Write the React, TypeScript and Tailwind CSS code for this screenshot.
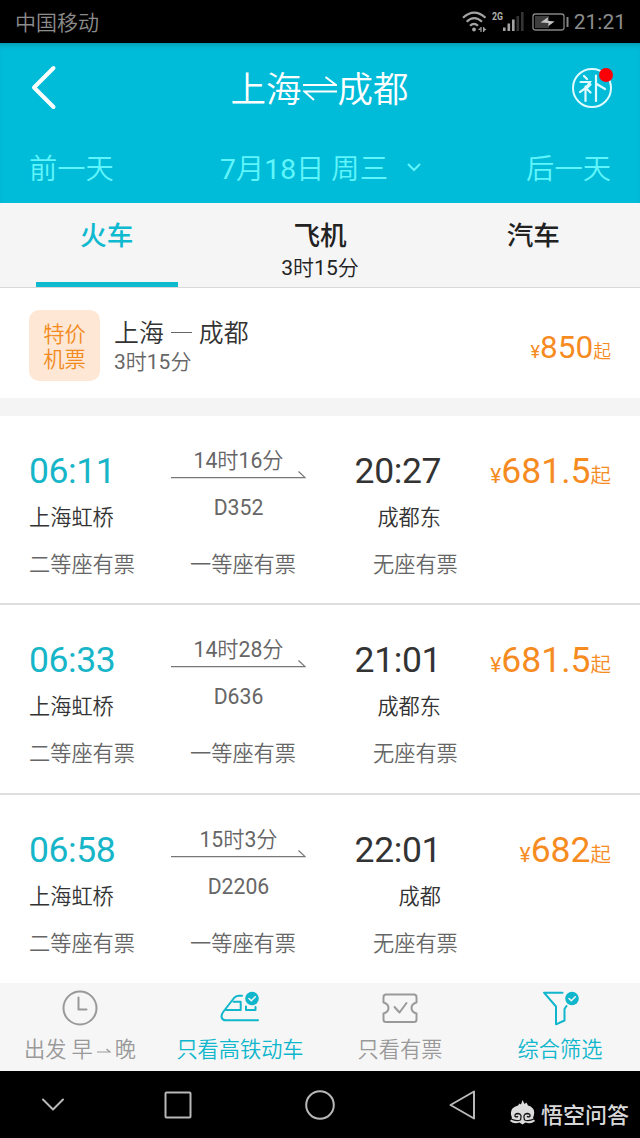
import type { ReactNode } from "react";

// Types
interface Train {
  depart: string;
  arrive: string;
  from: string;
  to: string;
  duration: string;
  code: string;
  price: string;
}

const trains: Train[] = [
  { depart: "06:11", arrive: "20:27", from: "上海虹桥", to: "成都东", duration: "14时16分", code: "D352", price: "681.5" },
  { depart: "06:33", arrive: "21:01", from: "上海虹桥", to: "成都东", duration: "14时28分", code: "D636", price: "681.5" },
  { depart: "06:58", arrive: "22:01", from: "上海虹桥", to: "成都", duration: "15时3分", code: "D2206", price: "682" },
];

function StatusBar() {
  return (
    <div className="flex h-[43px] items-center bg-black pl-[15px] pr-[14px] text-[21px] leading-none text-[#8c8c8c]">
      <span className="pt-[3px]">中国移动</span>
      <svg className="ml-auto" width="108" height="24" viewBox="0 0 108 24" fill="none">
        {/* wifi */}
        <g stroke="#a3a3a3" strokeWidth="2.2">
          <path d="M1 7.8Q12-2.5 23.5 7.8" />
          <path d="M4.7 11.8Q12 4.5 20 11.8" />
          <path d="M8 15.8Q12 11.8 16 15.8" />
        </g>
        <circle cx="12" cy="19.5" r="1.9" fill="#a3a3a3" />
        <path d="M19 17v5M21.6 17v5" stroke="#a3a3a3" strokeWidth="1.2" />
        <path d="M18.5 17.5l-2.5 2.5h2.5zM22 18l2.5 1.5L22 21z" fill="#a3a3a3" />
        <text x="30" y="10" fontSize="10.5" fontWeight="700" fill="#b0b0b0" textLength="11" lengthAdjust="spacingAndGlyphs">2G</text>
        {/* signal bars */}
        <g fill="#a3a3a3">
          <rect x="41" y="17.5" width="2.6" height="3.5" />
          <rect x="45.5" y="13.5" width="2.6" height="7.5" />
          <rect x="50" y="9.5" width="2.6" height="11.5" />
        </g>
        <g fill="#343434">
          <rect x="54.5" y="6" width="2.6" height="15" />
          <rect x="59" y="2" width="2.6" height="19" />
        </g>
        {/* battery */}
        <rect x="71" y="4" width="31" height="16" rx="2.5" stroke="#858585" strokeWidth="1.3" />
        <rect x="73" y="6" width="14" height="12" fill="#3d3d3d" />
        <path d="M78.5 12.5L86 7.3l-.4 3.5 7 .8-6.4 4.7.3-3.2z" fill="#c4c4c4" />
        <path d="M105.5 7v10" stroke="#858585" strokeWidth="2" />
      </svg>
      <span className="ml-[4px] pt-[2px]">21:21</span>
    </div>
  );
}

function Header() {
  return (
    <header className="h-40 bg-[#00bcd8] shadow-[inset_0_5px_5px_-3px_rgba(0,90,105,0.35)]">
      <div className="flex h-[90px] items-center justify-between pl-[30px] pr-[28px] text-white">
        <svg width="28" height="46" viewBox="0 0 28 46" fill="none" stroke="currentColor" strokeWidth="4" strokeLinecap="round" strokeLinejoin="round">
          <path d="M23.5 3L4 22.5L23.5 42" />
        </svg>
        <h1 className="ml-[9px] flex items-center pt-[6px] text-[35.5px] leading-none">
          <span>上海</span>
          <svg className="mx-[1px] -mt-[3px]" width="34" height="28" viewBox="0 0 34 28" fill="none" stroke="currentColor" strokeWidth="2">
            <path d="M0 9H33L22.5 1" />
            <path d="M34 15.5H1.5L11 24" />
          </svg>
          <span>成都</span>
        </h1>
        <div className="relative flex size-[40px] items-center justify-center rounded-full border-2 border-[#dffbff]">
          <svg width="28" height="28" viewBox="0 0 28 28" fill="none" stroke="#dffbff" strokeWidth="2.2" strokeLinecap="round">
            <path d="M6 2l3 3M2.5 8h9.5Q8.5 14 2 18M7.5 12.5V27M12.5 10.5L8.5 14.5L12.5 18.5" />
            <path d="M18 1.5V27M18 9.5L27 15" />
          </svg>
          <span className="absolute -right-[3px] -top-[2px] size-[14px] rounded-full bg-[#fb0007]" />
        </div>
      </div>
      <div className="flex h-[70px] items-center justify-between px-[29px] pt-[5px] text-[28.3px] leading-none text-[#60f5fc]">
        <span>前一天</span>
        <span className="flex items-center">
          <span className="pl-[2px]">7月18日 周三</span>
          <svg className="-mt-[4px] ml-[18px]" width="16" height="12" viewBox="0 0 16 12" fill="none" stroke="currentColor" strokeWidth="2">
            <path d="M2 2l6 6 6-6" />
          </svg>
        </span>
        <span>后一天</span>
      </div>
    </header>
  );
}

function Tabs() {
  return (
    <nav className="grid h-[85px] grid-cols-3 border-b border-[#d9d9d9] bg-[#f5f5f5] text-center font-['Roboto','Noto_Sans_CJK_SC',sans-serif] text-[26.6px] font-medium leading-none text-[#222]">
      <div className="flex flex-col items-center justify-between pt-[20px] text-[#0fb9cf]">
        <span>火车</span>
        <span className="h-[5px] w-[142px] bg-[#0fbace]" />
      </div>
      <div className="pt-[20px]">
        飞机
        <div className="mt-[8px] font-['Roboto','Noto_Sans_CJK_SC_DemiLight','Noto_Sans_CJK_SC',sans-serif] text-[21px] font-normal leading-none">3时15分</div>
      </div>
      <div className="pt-[20px]">汽车</div>
    </nav>
  );
}

function Price({ value, small }: { value: string; small?: boolean }) {
  return (
    <span className="whitespace-nowrap text-[#f68b1f]">
      <span className={small ? "text-[18px]" : "text-[21px]"}>¥</span>
      <span className={small ? "text-[31.5px]" : "text-[35.5px]"}>{value}</span>
      <span className={small ? "text-[17.8px]" : "text-[20.5px]"}>起</span>
    </span>
  );
}

function FlightRow() {
  return (
    <section className="flex h-[110px] items-center bg-white px-[29px]">
      <div className="mt-[4px] flex size-[71px] flex-col items-center justify-center rounded-[10px] bg-[#fee8d5] pt-[3px] text-[21.3px] leading-[25px] text-[#f28a20]">
        <span>特价</span>
        <span>机票</span>
      </div>
      <div className="ml-[14px] pt-[9px]">
        <div className="flex h-[30px] items-center pt-[3px] text-[24.9px] leading-none text-[#333]">
          上海
          <span className="mx-[7px] -mt-[3px] h-px w-[21px] bg-[#666]" />
          成都
        </div>
        <div className="h-[30px] text-[21px] leading-[29px] text-[#666]">3时15分</div>
      </div>
      <div className="ml-auto pt-[9px] leading-none">
        <Price value="850" small />
      </div>
    </section>
  );
}

function TrainRow({ train }: { train: Train }) {
  return (
    <article className="h-[189.33px] border-b-2 border-[#dedede] bg-white px-[29px] pt-[32px] text-[21.2px] text-[#333] last:border-white">
      <div className="grid grid-cols-[142px_135px_135px_170px]">
        <div>
          <div className="h-[46px] text-[35.5px] leading-[46px] tracking-[-0.4px] text-[#17b5c8]">{train.depart}</div>
          <div className="h-[47px] leading-[48px]">{train.from}</div>
        </div>
        <div className="text-center text-[#666]">
          <div className="h-[23px] leading-[26px]">{train.duration}</div>
          <svg className="block" width="135" height="8" viewBox="0 0 135 8" fill="none" stroke="#777" strokeWidth="1.2">
            <path d="M0 6.6H134L127.5 0.5" />
          </svg>
          <div className="mt-[13px] leading-[32px]">{train.code}</div>
        </div>
        <div className="text-right">
          <div className="h-[46px] text-[35.5px] leading-[46px] tracking-[-0.4px]">{train.arrive}</div>
          <div className="h-[47px] leading-[48px]">{train.to}</div>
        </div>
        <div className="h-[46px] text-right leading-[46px]">
          <Price value={train.price} />
        </div>
      </div>
      <div className="grid grid-cols-[161px_183px_1fr] leading-[48px] text-[#666]">
        <span>二等座有票</span>
        <span>一等座有票</span>
        <span>无座有票</span>
      </div>
    </article>
  );
}

function CheckBadge() {
  return (
    <>
      <circle cx="32" cy="9.5" r="6.8" fill="currentColor" stroke="none" />
      <path d="M29 9.5l2.3 2.3 4-4" stroke="#f5f5f5" strokeWidth="1.5" />
    </>
  );
}

function FilterItem({ active, label, children }: { active?: boolean; label: ReactNode; children: ReactNode }) {
  return (
    <div className={active ? "flex flex-col items-center pt-[6px] text-[#0fb6cc]" : "flex flex-col items-center pt-[6px] text-[#999]"}>
      <svg width="40" height="40" viewBox="0 0 40 40" fill="none" stroke="currentColor" strokeWidth="2" strokeLinejoin="round" strokeLinecap="round">
        {children}
      </svg>
      <div className="flex h-[40px] items-center whitespace-nowrap pt-[2px] text-[21.2px] leading-none">{label}</div>
    </div>
  );
}

function FilterBar() {
  return (
    <div className="grid h-[88px] grid-cols-4 bg-[#f6f6f6]">
      <FilterItem
        label={
          <>
            出发 早
            <svg className="mx-[4px] mt-[2px]" width="14" height="6" viewBox="0 0 14 6" fill="none" stroke="currentColor" strokeWidth="1.2">
              <path d="M0 4H13L9.5 1" />
            </svg>
            晚
          </>
        }
      >
        <circle cx="20" cy="19" r="16.5" />
        <path d="M18.5 8.5V20.5H26.5" />
      </FilterItem>
      <FilterItem active label="只看高铁动车">
        <path d="M22 6.7H18.5Q16 6.7 14 9L3.5 22.5Q1.5 25 1.5 27.5Q2 31.3 6 31.3H38" />
        <path d="M20.7 12.7H13.5M20.7 12.7V21H6" />
        <path d="M26 17.5V21H35.5V18" />
        <CheckBadge />
      </FilterItem>
      <FilterItem label="只看有票">
        <path d="M6 5.5H34Q36.5 5.5 36.5 8V13.5Q31.5 15 31.5 19Q31.5 23 36.5 24.5V30.5Q36.5 33 34 33H6Q3.5 33 3.5 30.5V24.5Q8.5 23 8.5 19Q8.5 15 3.5 13.5V8Q3.5 5.5 6 5.5Z" />
        <path d="M14.5 18l5 5.5 7-9.5" />
      </FilterItem>
      <FilterItem active label="综合筛选">
        <path d="M22.5 3.7H4L16 17.5V35.3L24.5 31.5V20L26.5 17" />
        <CheckBadge />
      </FilterItem>
    </div>
  );
}

function SystemNav() {
  return (
    <div className="relative h-[67px] bg-black">
      <svg className="block" width="640" height="67" viewBox="0 0 640 67" fill="none" stroke="#b8b8b8" strokeWidth="2" strokeLinejoin="round" strokeLinecap="round">
        <path d="M43 28.5L53 38.5L63 28.5" />
        <rect x="165.5" y="21.5" width="25" height="25" rx="1" />
        <circle cx="320" cy="34" r="13.8" />
        <path d="M474 20.5V47.5L450.5 34Z" />
      </svg>
      <div className="absolute right-[11px] top-[27px] flex items-center gap-[5px] font-['Noto_Sans_CJK_SC',sans-serif] text-[22px] font-medium leading-[30px] text-[#d8d8d8]">
        <svg width="27" height="26" viewBox="0 0 27 26">
          <path d="M3 18Q-1 8 9 5.500L10.500 3.500L12 4.500L13.500 0L15.500 4L17.500 2.500L19 5.500Q28 8 24 18L26 21Q22 24.500 16.500 22.500L13.500 24.500L10.500 22.500Q5 24.500 1 21Z" fill="#dcdcdc" />
          <path d="M11.500 20Q13.500 14 9 13.500Q5.500 13.500 6 16.200Q7.500 17.500 9 16.200M15.500 20Q13.500 14 18 13.500Q21.500 13.500 21 16.200Q19.500 17.500 18 16.200M2 19Q7 21.500 11.500 20M25 19Q20 21.500 15.500 20" fill="none" stroke="#111" strokeWidth="1.3" />
        </svg>
        <span>悟空问答</span>
      </div>
    </div>
  );
}

export default function App() {
  return (
    <main className="flex h-[1138px] w-[640px] flex-col overflow-hidden bg-white font-['Roboto','Noto_Sans_CJK_SC_DemiLight','Noto_Sans_CJK_SC',sans-serif]">
      <StatusBar />
      <Header />
      <Tabs />
      <FlightRow />
      <div className="h-[18px] bg-[#f4f4f4]" />
      <div className="h-[567px] overflow-hidden">
        {trains.map((train) => (
          <TrainRow key={train.code} train={train} />
        ))}
      </div>
      <FilterBar />
      <SystemNav />
    </main>
  );
}
